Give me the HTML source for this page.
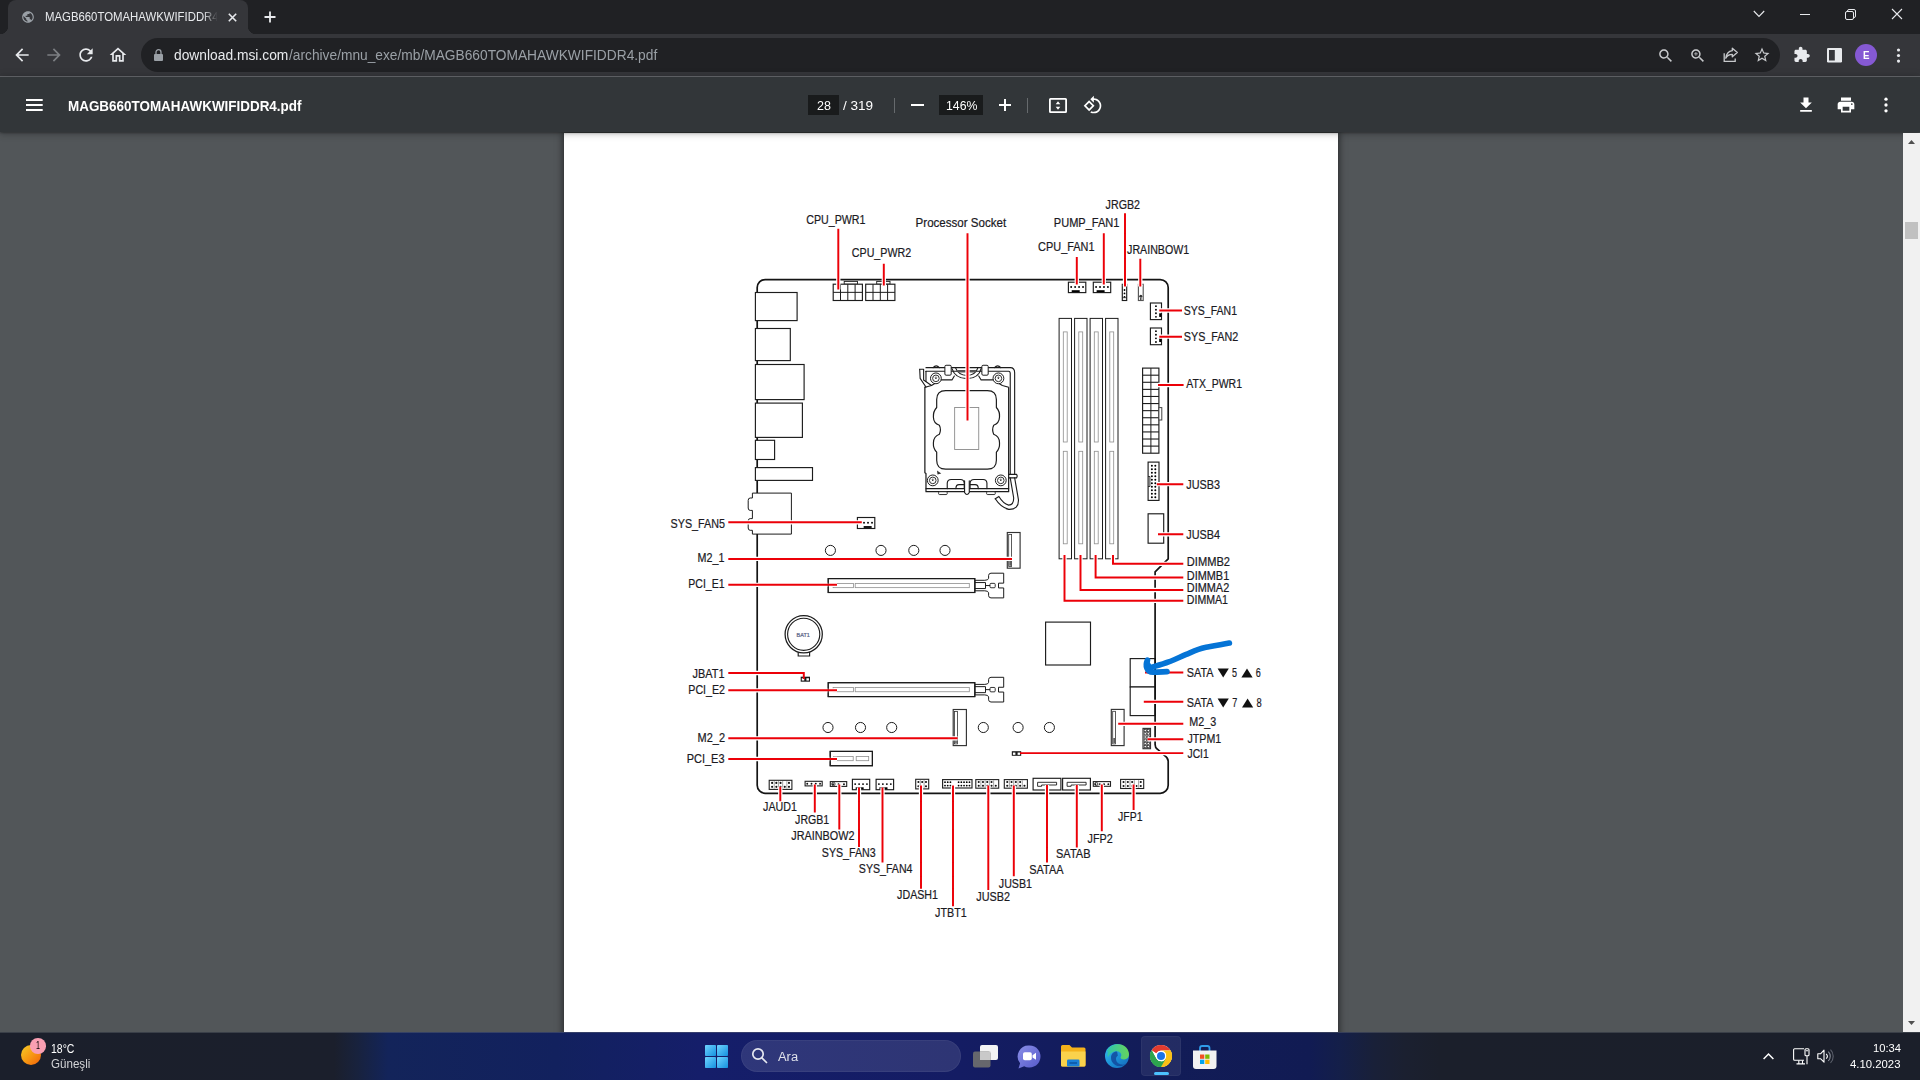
<!DOCTYPE html>
<html lang="tr"><head><meta charset="utf-8"><title>MAGB660TOMAHAWKWIFIDDR4.pdf</title>
<style>
html,body{margin:0;padding:0}
body{width:1920px;height:1080px;overflow:hidden;position:relative;background:#525659;font-family:"Liberation Sans",sans-serif}
.t{position:absolute;white-space:nowrap;line-height:1;transform-origin:0 0;display:block}
.i{position:absolute;display:block;overflow:visible}
.abs{position:absolute}
#tabstrip{left:0;top:0;width:1920px;height:34px;background:#202124}
#tab{left:8px;top:0;width:240px;height:34px;background:#35363a;border-radius:8px 8px 0 0}
#tab:before,#tab:after{content:"";position:absolute;bottom:0;width:8px;height:8px;background:radial-gradient(circle at 0 0,#202124 8px,#35363a 8.5px)}
#tab:before{left:-8px}
#tab:after{right:-8px;background:radial-gradient(circle at 100% 0,#202124 8px,#35363a 8.5px)}
#toolbar{left:0;top:34px;width:1920px;height:42px;background:#35363a}
#toolbar-line{left:0;top:76px;width:1920px;height:1px;background:#5c5e62;z-index:6}
#omnibox{left:141px;top:38px;width:1638.5px;height:34px;border-radius:17px;background:#202124}
#pdfbar{left:0;top:77px;width:1920px;height:55px;background:#323639;box-shadow:0 -2px 8px rgba(0,0,0,.09),0 4px 8px rgba(0,0,0,.06),0 1px 2px rgba(0,0,0,.3),0 2px 6px rgba(0,0,0,.15);z-index:5}
.pbox{background:#191b1c;height:20px;top:94.8px}
.pdiv{width:1px;height:15.5px;top:97.8px;background:#666a6d}
#viewer{left:0;top:132px;width:1920px;height:900px;background:#525659;overflow:hidden}
#page{left:564px;top:0.5px;width:774px;height:910px;background:#fff;box-shadow:0 0 7px 1px rgba(0,0,0,.55)}
#sbar{left:1903px;top:133px;width:17px;height:899px;background:#f1f1f1;z-index:6}
#sthumb{left:2px;top:89px;width:13px;height:17px;background:#c1c1c1}
#taskbar{left:0;top:1032px;width:1920px;height:48px;z-index:7;
background:linear-gradient(90deg,#1b1f2b 0,#1b1f2c 17.4%,#18223d 18.6%,#13245a 20.2%,#12215e 29%,#151e6a 36.5%,#141c63 50%,#121c58 60%,#111b53 68.2%,#141f49 69.8%,#192038 71.6%,#1b2030 73.2%,#1b1f2b 75%,#1b1f2a 100%)}
#search{left:741px;top:8px;width:220px;height:32px;border-radius:16px;background:rgba(255,255,255,.115);box-shadow:inset 0 0 0 1px rgba(255,255,255,.05)}
#dia{left:0;top:0;z-index:3}
#dia text{font-family:"Liberation Sans",sans-serif}
</style></head><body>

<div id="tabstrip" class="abs"></div><div id="tab" class="abs"></div>
<svg class="i" style="left:20.5px;top:10px" width="14" height="14" viewBox="0 0 24 24" fill="#9aa0a6"><path d="M12 2C6.48 2 2 6.48 2 12s4.48 10 10 10 10-4.48 10-10S17.52 2 12 2zm-1 17.93c-3.95-.49-7-3.85-7-7.93 0-.62.08-1.21.21-1.79L9 15v1c0 1.1.9 2 2 2v1.930zm6.900-2.540c-.26-.81-1-1.390-1.900-1.390h-1v-3c0-.55-.45-1-1-1H8v-2h2c.55 0 1-.45 1-1V7h2c1.100 0 2-.9 2-2v-.410c2.930 1.190 5 4.060 5 7.410 0 2.080-.8 3.970-2.100 5.390z"/></svg>
<span class="t" style="left:44.50px;top:10.90px;font-size:12.65px;color:#e8eaed;transform:scaleX(0.8990);-webkit-mask-image:linear-gradient(90deg,#000 0,#000 91%,transparent 99.500%);mask-image:linear-gradient(90deg,#000 0,#000 91%,transparent 99.500%);">MAGB660TOMAHAWKWIFIDDR4</span>
<svg class="i" style="left:227.5px;top:12.5px" width="9" height="9" viewBox="0 0 9 9" stroke="#e8eaed" stroke-width="1.6" fill="none"><path d="M.8.8l7.400 7.400M8.200.8L.8 8.200"/></svg>
<svg class="i" style="left:264px;top:11px" width="12" height="12" viewBox="0 0 12 12" stroke="#e8eaed" stroke-width="1.8" fill="none"><path d="M6 .5v11M.5 6h11"/></svg>
<svg class="i" style="left:1753px;top:10px" width="12" height="8" viewBox="0 0 12 8" stroke="#e8eaed" stroke-width="1.1" fill="none"><path d="M.8 1l5.200 5.500L11.200 1"/></svg>
<svg class="i" style="left:1800px;top:14px" width="10" height="1" viewBox="0 0 10 1"><rect width="10" height="1" fill="#e8eaed"/></svg>
<svg class="i" style="left:1845px;top:8.5px" width="11" height="11" viewBox="0 0 11 11" stroke="#e8eaed" stroke-width="1" fill="none"><rect x=".5" y="2.500" width="8" height="8" rx="1.500"/><path d="M2.500 2.500V2A1.500 1.500 0 0 1 4 .5h5A1.500 1.500 0 0 1 10.500 2v5A1.500 1.500 0 0 1 9 8.500H8.500"/></svg>
<svg class="i" style="left:1892px;top:9px" width="10" height="10" viewBox="0 0 10 10" stroke="#e8eaed" stroke-width="1.1" fill="none"><path d="M0 0l10 10M10 0L0 10"/></svg>
<div id="toolbar" class="abs"></div><div id="toolbar-line" class="abs"></div><div id="omnibox" class="abs"></div>
<svg class="i" style="left:11.70px;top:45.00px" width="20.00" height="20.00" viewBox="0 0 24 24" fill="#e8eaed"><path d="M20 11H7.830l5.590-5.590L12 4l-8 8 8 8 1.410-1.410L7.830 13H20v-2z"/></svg>
<svg class="i" style="left:43.70px;top:45.00px" width="20.00" height="20.00" viewBox="0 0 24 24" fill="#7c7f83"><path d="M12 4l-1.410 1.410L16.170 11H4v2h12.170l-5.580 5.590L12 20l8-8z"/></svg>
<svg class="i" style="left:75.70px;top:45.00px" width="20.00" height="20.00" viewBox="0 0 24 24" fill="#e8eaed"><path d="M17.650 6.350C16.200 4.900 14.210 4 12 4c-4.420 0-7.990 3.580-7.990 8s3.570 8 7.990 8c3.730 0 6.840-2.550 7.730-6h-2.080c-.82 2.330-3.040 4-5.650 4-3.310 0-6-2.690-6-6s2.690-6 6-6c1.660 0 3.140.69 4.220 1.780L13 11h7V4l-2.350 2.350z"/></svg>
<svg class="i" style="left:107.50px;top:45.00px" width="20.00" height="20.00" viewBox="0 0 24 24" fill="#e8eaed"><path d="M12 5.690l5 4.500V18h-2v-6H9v6H7v-7.810l5-4.500M12 3L2 12h3v8h6v-6h2v6h6v-8h3L12 3z"/></svg>
<svg class="i" style="left:153.5px;top:48.5px" width="9" height="12" viewBox="0 0 9 12" fill="#9aa0a6"><path d="M1 5h7a1 1 0 0 1 1 1v5a1 1 0 0 1-1 1H1a1 1 0 0 1-1-1V6a1 1 0 0 1 1-1z"/><path d="M2 5.500V3.200a2.500 2.500 0 0 1 5 0V5.500" fill="none" stroke="#9aa0a6" stroke-width="1.300"/></svg>
<span class="t" style="left:174.30px;top:47.90px;font-size:14.53px;color:#e8eaed;transform:scaleX(0.9513);">download.msi.com</span>
<span class="t" style="left:288.80px;top:47.90px;font-size:14.53px;color:#9aa0a6;transform:scaleX(0.9470);">/archive/mnu_exe/mb/MAGB660TOMAHAWKWIFIDDR4.pdf</span>
<svg class="i" style="left:1657.45px;top:46.85px" width="17.50" height="17.50" viewBox="0 0 24 24" fill="#c7c9cc"><path d="M15.500 14h-.79l-.28-.27C15.410 12.590 16 11.110 16 9.500 16 5.910 13.090 3 9.500 3S3 5.910 3 9.500 5.910 16 9.500 16c1.610 0 3.090-.59 4.230-1.570l.27.28v.79l5 4.990L20.490 19l-4.990-5zm-6 0C7.010 14 5 11.990 5 9.500S7.010 5 9.500 5 14 7.010 14 9.500 11.990 14 9.500 14z"/></svg>
<svg class="i" style="left:1689.25px;top:46.85px" width="17.50" height="17.50" viewBox="0 0 24 24" fill="#c7c9cc"><path d="M15.500 14h-.79l-.28-.27C15.410 12.590 16 11.110 16 9.500 16 5.910 13.090 3 9.500 3S3 5.910 3 9.500 5.910 16 9.500 16c1.610 0 3.090-.59 4.230-1.570l.27.28v.79l5 4.990L20.490 19l-4.990-5zm-6 0C7.010 14 5 11.990 5 9.500S7.010 5 9.500 5 14 7.010 14 9.500 11.990 14 9.500 14z"/><path d="M12 10h-2v2H9v-2H7V9h2V7h1v2h2v1z"/></svg>
<svg class="i" style="left:1721.5px;top:47px" width="17" height="16" viewBox="0 0 17 16" fill="none" stroke="#c7c9cc" stroke-width="1.300"><path d="M2.200 6.200V14.300H13.200V11.500"/><path d="M10.300 1.200l5 4.300-5 4.300V7.300C7 7.300 5 8.600 3.800 11.200 4.300 7 6.500 4.300 10.300 3.700z" stroke-linejoin="round"/></svg>
<svg class="i" style="left:1752.70px;top:45.80px" width="18.00" height="18.00" viewBox="0 0 24 24" fill="#c7c9cc"><path d="M22 9.240l-7.190-.62L12 2 9.190 8.630 2 9.240l5.460 4.730L5.820 21 12 17.270 18.180 21l-1.630-7.030L22 9.240zM12 15.400l-3.760 2.270 1-4.280-3.320-2.880 4.380-.38L12 6.100l1.710 4.040 4.380.38-3.320 2.880 1 4.280L12 15.400z"/></svg>
<svg class="i" style="left:1793.25px;top:46.45px" width="17.50" height="17.50" viewBox="0 0 24 24" fill="#e8eaed"><path d="M20.500 11H19V7c0-1.100-.9-2-2-2h-4V3.500C13 2.120 11.880 1 10.500 1S8 2.120 8 3.500V5H4c-1.100 0-1.990.9-1.990 2v3.800H3.500c1.490 0 2.700 1.210 2.700 2.700s-1.210 2.700-2.700 2.700H2V20c0 1.100.9 2 2 2h3.800v-1.500c0-1.490 1.210-2.700 2.700-2.700 1.490 0 2.700 1.210 2.700 2.700V22H17c1.100 0 2-.9 2-2v-4h1.500c1.380 0 2.500-1.120 2.500-2.500S21.880 11 20.500 11z"/></svg>
<svg class="i" style="left:1826.5px;top:47.8px" width="15" height="14.500" viewBox="0 0 15 14.500"><rect width="15" height="14.500" rx="1.200" fill="#e8eaed"/><rect x="2" y="2" width="5.800" height="10.500" fill="#35363a"/></svg>
<div class="abs" style="left:1854.7px;top:43.7px;width:22.600px;height:22.600px;border-radius:50%;background:#8559d3"></div>
<span class="t" style="left:1862.90px;top:50.43px;font-size:11.19px;color:#ffffff;font-weight:bold;transform:scaleX(0.8707);">E</span>
<svg class="i" style="left:1888.90px;top:45.70px" width="19.00" height="19.00" viewBox="0 0 24 24" fill="#e8eaed"><circle cx="12" cy="5" r="2"/><circle cx="12" cy="12" r="2"/><circle cx="12" cy="19" r="2"/></svg>
<div id="pdfbar" class="abs"></div>
<div class="abs" style="z-index:6;left:0;top:0">
<svg class="i" style="left:25.800px;top:98.900px" width="16.700" height="12" viewBox="0 0 16.700 12" fill="#fff"><rect y="0" width="16.700" height="2"/><rect y="5" width="16.700" height="2"/><rect y="10" width="16.700" height="2"/></svg>
<span class="t" style="left:68.20px;top:98.90px;font-size:14.53px;color:#ffffff;font-weight:bold;transform:scaleX(0.9260);">MAGB660TOMAHAWKWIFIDDR4.pdf</span>
<div class="abs pbox" style="left:808px;width:31px"></div>
<span class="t" style="left:816.60px;top:99.62px;font-size:12.50px;color:#ffffff;transform:scaleX(0.9997);">28</span>
<span class="t" style="left:843.30px;top:99.62px;font-size:12.50px;color:#ffffff;transform:scaleX(1.0827);">/ 319</span>
<div class="abs pdiv" style="left:894px"></div>
<div class="abs" style="left:911px;top:104px;width:12.500px;height:2px;background:#fff"></div>
<div class="abs pbox" style="left:939px;width:44px"></div>
<span class="t" style="left:945.50px;top:99.62px;font-size:12.50px;color:#ffffff;transform:scaleX(0.9822);">146%</span>
<svg class="i" style="left:999px;top:99px" width="12" height="12" viewBox="0 0 12 12" fill="#fff"><rect x="5" width="2" height="12"/><rect y="5" width="12" height="2"/></svg>
<div class="abs pdiv" style="left:1027px"></div>
<svg class="i" style="left:1049px;top:97.5px" width="18" height="15" viewBox="0 0 18 15" fill="#fff"><path d="M1.500 0h15A1.500 1.500 0 0 1 18 1.500v12a1.500 1.500 0 0 1-1.500 1.500h-15A1.500 1.500 0 0 1 0 13.500v-12A1.500 1.500 0 0 1 1.500 0zM1.800 1.800v11.400h14.400V1.800z" fill-rule="evenodd"/><path d="M9 3.200l2.300 3H6.700zM9 11.800l-2.300-3h4.600z"/></svg>
<svg class="i" style="left:1083.20px;top:94.60px" width="20.00" height="20.00" viewBox="0 0 24 24" fill="#ffffff"><path d="M7.340 6.410L.86 12.900l6.490 6.480 6.490-6.480-6.500-6.490zM3.690 12.900l3.660-3.660L11 12.900l-3.660 3.660-3.650-3.660zm15.670-6.260C17.610 4.880 15.300 4 13 4V.76L8.760 5 13 9.240V6c1.790 0 3.580.68 4.950 2.050 2.730 2.730 2.730 7.170 0 9.900C16.580 19.320 14.790 20 13 20c-.97 0-1.940-.21-2.840-.61l-1.490 1.490C10.020 21.620 11.510 22 13 22c2.300 0 4.610-.88 6.360-2.640 3.520-3.510 3.520-9.210 0-12.720z"/></svg>
<svg class="i" style="left:1795.60px;top:94.70px" width="20.00" height="20.00" viewBox="0 0 24 24" fill="#ffffff"><path d="M19 9h-4V3H9v6H5l7 7 7-7zM5 18v2h14v-2H5z"/></svg>
<svg class="i" style="left:1836.00px;top:95.00px" width="20.00" height="20.00" viewBox="0 0 24 24" fill="#ffffff"><path d="M19 8H5c-1.660 0-3 1.340-3 3v6h4v4h12v-4h4v-6c0-1.660-1.340-3-3-3zm-3 11H8v-5h8v5zm3-7c-.55 0-1-.45-1-1s.45-1 1-1 1 .45 1 1-.45 1-1 1zm-1-9H6v4h12V3z"/></svg>
<svg class="i" style="left:1875.90px;top:95.00px" width="20.00" height="20.00" viewBox="0 0 24 24" fill="#ffffff"><circle cx="12" cy="5" r="2"/><circle cx="12" cy="12" r="2"/><circle cx="12" cy="19" r="2"/></svg>
</div>
<div id="viewer" class="abs"><div id="page" class="abs"></div></div>
<div id="sbar" class="abs"><div id="sthumb" class="abs"></div><svg class="i" style="left:5px;top:7px" width="7" height="4" viewBox="0 0 7 4" fill="#505050"><path d="M0 4L3.500 0 7 4z"/></svg><svg class="i" style="left:5px;top:888px" width="7" height="4" viewBox="0 0 7 4" fill="#505050"><path d="M0 0L3.500 4 7 0z"/></svg></div>
<svg id="dia" class="abs" width="1920" height="1080" viewBox="0 0 1920 1080">
<path d="M765.2 279.6H1160.2a8 8 0 0 1 8 8V558.8L1155.1 571.8V744.500Q1155.1 747.6 1157.4 749.2L1164.600 755.6Q1168.2 757.900 1168.2 761V785.300a8 8 0 0 1-8 8H765.2a8 8 0 0 1-8-8V287.600a8 8 0 0 1 8-8z" fill="#fff" stroke="#141414" stroke-width="1.7"/>
<rect x="755.40" y="292.50" width="41.70" height="28.10" fill="#fff" stroke="#1c1c1c" stroke-width="1.15"/>
<rect x="755.40" y="328.50" width="34.90" height="32.10" fill="#fff" stroke="#1c1c1c" stroke-width="1.15"/>
<rect x="755.40" y="364.50" width="48.70" height="35.10" fill="#fff" stroke="#1c1c1c" stroke-width="1.15"/>
<rect x="755.40" y="403.10" width="47.00" height="34.30" fill="#fff" stroke="#1c1c1c" stroke-width="1.15"/>
<rect x="755.40" y="440.30" width="19.20" height="19.20" fill="#fff" stroke="#1c1c1c" stroke-width="1.15"/>
<rect x="755.40" y="467.60" width="57.10" height="12.80" fill="#fff" stroke="#1c1c1c" stroke-width="1.15"/>
<path d="M752.4 493.1H791.4V534.1H752.4V530.3H750.2Q748.2 530.3 748.2 528V521Q748.2 518.6 750.2 518.6H752.4V510.4H750.2Q748.2 510.4 748.2 508V500.400Q748.2 498 750.2 498H752.4z" fill="#fff" stroke="#1c1c1c" stroke-width="1"/>
<rect x="844.20" y="281.40" width="13.30" height="2.80" fill="#fff" stroke="#1c1c1c" stroke-width="0.90"/>
<rect x="833.20" y="284.20" width="29.20" height="16.30" fill="#fff" stroke="#1c1c1c" stroke-width="1.15"/>
<path d="M833.20 292.35H862.40" stroke="#1c1c1c" stroke-width="1"/>
<path d="M840.50 284.2V300.5" stroke="#1c1c1c" stroke-width="1"/>
<path d="M847.80 284.2V300.5" stroke="#1c1c1c" stroke-width="1"/>
<path d="M855.10 284.2V300.5" stroke="#1c1c1c" stroke-width="1"/>
<rect x="876.70" y="281.40" width="13.30" height="2.80" fill="#fff" stroke="#1c1c1c" stroke-width="0.90"/>
<rect x="865.70" y="284.20" width="29.20" height="16.30" fill="#fff" stroke="#1c1c1c" stroke-width="1.15"/>
<path d="M865.70 292.35H894.90" stroke="#1c1c1c" stroke-width="1"/>
<path d="M873.00 284.2V300.5" stroke="#1c1c1c" stroke-width="1"/>
<path d="M880.30 284.2V300.5" stroke="#1c1c1c" stroke-width="1"/>
<path d="M887.60 284.2V300.5" stroke="#1c1c1c" stroke-width="1"/>
<rect x="1068.40" y="282.20" width="17.40" height="10.40" fill="#fff" stroke="#1c1c1c" stroke-width="1.15"/><circle cx="1071.18" cy="286.98" r="0.95" fill="#000"/><circle cx="1075.13" cy="286.98" r="0.95" fill="#000"/><circle cx="1079.08" cy="286.98" r="0.95" fill="#000"/><circle cx="1083.03" cy="286.98" r="0.95" fill="#000"/><rect x="1071.71" y="290.20" width="8.00" height="2" fill="#000"/>
<rect x="1093.30" y="282.20" width="17.40" height="10.40" fill="#fff" stroke="#1c1c1c" stroke-width="1.15"/><circle cx="1096.08" cy="286.98" r="0.95" fill="#000"/><circle cx="1100.03" cy="286.98" r="0.95" fill="#000"/><circle cx="1103.98" cy="286.98" r="0.95" fill="#000"/><circle cx="1107.93" cy="286.98" r="0.95" fill="#000"/><rect x="1096.61" y="290.20" width="8.00" height="2" fill="#000"/>
<rect x="1150.40" y="303.00" width="11.10" height="16.60" fill="#fff" stroke="#1c1c1c" stroke-width="1.15"/><circle cx="1155.95" cy="306.15" r="0.95" fill="#000"/><circle cx="1155.95" cy="309.72" r="0.95" fill="#000"/><circle cx="1155.95" cy="313.29" r="0.95" fill="#000"/><circle cx="1155.95" cy="316.86" r="0.95" fill="#000"/><rect x="1159.20" y="313.29" width="2" height="3.65" fill="#000"/>
<rect x="1150.40" y="328.00" width="11.10" height="16.70" fill="#fff" stroke="#1c1c1c" stroke-width="1.15"/><circle cx="1155.95" cy="331.17" r="0.95" fill="#000"/><circle cx="1155.95" cy="334.76" r="0.95" fill="#000"/><circle cx="1155.95" cy="338.35" r="0.95" fill="#000"/><circle cx="1155.95" cy="341.94" r="0.95" fill="#000"/><rect x="1159.20" y="338.35" width="2" height="3.67" fill="#000"/>
<rect x="857.40" y="517.50" width="17.40" height="11.00" fill="#fff" stroke="#1c1c1c" stroke-width="1.15"/><circle cx="864.01" cy="522.78" r="0.95" fill="#000"/><circle cx="868.01" cy="522.78" r="0.95" fill="#000"/><circle cx="872.02" cy="522.78" r="0.95" fill="#000"/><rect x="863.66" y="526.10" width="8.00" height="1.8" fill="#000"/>
<rect x="1122.30" y="284.30" width="4.40" height="16.20" fill="#fff" stroke="#1c1c1c" stroke-width="1.15"/>
<circle cx="1124.50" cy="290.00" r="0.90" fill="#000"/><circle cx="1124.50" cy="293.40" r="0.90" fill="#000"/><circle cx="1124.50" cy="296.80" r="0.90" fill="#000"/>
<path d="M1122.3 297.7H1126.7" stroke="#1c1c1c" stroke-width=".8"/>
<rect x="1138.40" y="284.30" width="4.80" height="16.20" fill="#fff" stroke="#555" stroke-width="1.15"/>
<circle cx="1140.80" cy="296.20" r="1.50" fill="#333"/>
<circle cx="1140.80" cy="299.00" r="0.90" fill="#333"/>
<rect x="1059.10" y="318.40" width="12.40" height="240.40" fill="#fff" stroke="#1c1c1c" stroke-width="1.00"/>
<rect x="1063.30" y="331.90" width="3.90" height="110.10" fill="#fff" stroke="#8e8e8e" stroke-width="0.80"/>
<rect x="1063.30" y="451.30" width="3.90" height="92.50" fill="#fff" stroke="#8e8e8e" stroke-width="0.80"/>
<rect x="1074.60" y="318.40" width="12.40" height="240.40" fill="#fff" stroke="#1c1c1c" stroke-width="1.00"/>
<rect x="1078.80" y="331.90" width="3.90" height="110.10" fill="#fff" stroke="#8e8e8e" stroke-width="0.80"/>
<rect x="1078.80" y="451.30" width="3.90" height="92.50" fill="#fff" stroke="#8e8e8e" stroke-width="0.80"/>
<rect x="1090.10" y="318.40" width="12.40" height="240.40" fill="#fff" stroke="#1c1c1c" stroke-width="1.00"/>
<rect x="1094.30" y="331.90" width="3.90" height="110.10" fill="#fff" stroke="#8e8e8e" stroke-width="0.80"/>
<rect x="1094.30" y="451.30" width="3.90" height="92.50" fill="#fff" stroke="#8e8e8e" stroke-width="0.80"/>
<rect x="1105.60" y="318.40" width="12.40" height="240.40" fill="#fff" stroke="#1c1c1c" stroke-width="1.00"/>
<rect x="1109.80" y="331.90" width="3.90" height="110.10" fill="#fff" stroke="#8e8e8e" stroke-width="0.80"/>
<rect x="1109.80" y="451.30" width="3.90" height="92.50" fill="#fff" stroke="#8e8e8e" stroke-width="0.80"/>
<rect x="1142.60" y="368.10" width="16.30" height="85.10" fill="#fff" stroke="#1c1c1c" stroke-width="1.15"/>
<path d="M1150.9 368.1V453.2" stroke="#1c1c1c" stroke-width="1"/>
<path d="M1142.6 375.19H1158.9" stroke="#1c1c1c" stroke-width="1.1"/>
<path d="M1142.6 382.28H1158.9" stroke="#1c1c1c" stroke-width="1.1"/>
<path d="M1142.6 389.38H1158.9" stroke="#1c1c1c" stroke-width="1.1"/>
<path d="M1142.6 396.47H1158.9" stroke="#1c1c1c" stroke-width="1.1"/>
<path d="M1142.6 403.56H1158.9" stroke="#1c1c1c" stroke-width="1.1"/>
<path d="M1142.6 410.65H1158.9" stroke="#1c1c1c" stroke-width="1.1"/>
<path d="M1142.6 417.74H1158.9" stroke="#1c1c1c" stroke-width="1.1"/>
<path d="M1142.6 424.83H1158.9" stroke="#1c1c1c" stroke-width="1.1"/>
<path d="M1142.6 431.93H1158.9" stroke="#1c1c1c" stroke-width="1.1"/>
<path d="M1142.6 439.02H1158.9" stroke="#1c1c1c" stroke-width="1.1"/>
<path d="M1142.6 446.11H1158.9" stroke="#1c1c1c" stroke-width="1.1"/>
<rect x="1158.90" y="407.60" width="2.90" height="12.40" fill="#fff" stroke="#444" stroke-width="1.00"/>
<rect x="1148.10" y="462.10" width="10.90" height="38.30" fill="#fff" stroke="#1c1c1c" stroke-width="1.15"/>
<circle cx="1151.90" cy="465.80" r="1.00" fill="#000"/><circle cx="1155.30" cy="465.80" r="1.00" fill="#000"/><circle cx="1151.90" cy="469.30" r="1.00" fill="#000"/><circle cx="1155.30" cy="469.30" r="1.00" fill="#000"/><circle cx="1151.90" cy="472.80" r="1.00" fill="#000"/><circle cx="1155.30" cy="472.80" r="1.00" fill="#000"/><circle cx="1151.90" cy="476.30" r="1.00" fill="#000"/><circle cx="1155.30" cy="476.30" r="1.00" fill="#000"/><circle cx="1151.90" cy="479.80" r="1.00" fill="#000"/><circle cx="1155.30" cy="479.80" r="1.00" fill="#000"/><circle cx="1151.90" cy="483.30" r="1.00" fill="#000"/><circle cx="1155.30" cy="483.30" r="1.00" fill="#000"/><circle cx="1151.90" cy="486.80" r="1.00" fill="#000"/><circle cx="1155.30" cy="486.80" r="1.00" fill="#000"/><circle cx="1151.90" cy="490.30" r="1.00" fill="#000"/><circle cx="1155.30" cy="490.30" r="1.00" fill="#000"/><circle cx="1151.90" cy="493.80" r="1.00" fill="#000"/><circle cx="1155.30" cy="493.80" r="1.00" fill="#000"/><circle cx="1151.90" cy="497.30" r="1.00" fill="#000"/><circle cx="1155.30" cy="497.30" r="1.00" fill="#000"/>
<path d="M1148.1 476.500h1.800v10h-1.800" fill="none" stroke="#1c1c1c" stroke-width=".9"/>
<rect x="1148.10" y="513.80" width="15.60" height="29.40" fill="#fff" stroke="#1c1c1c" stroke-width="1.15"/>
<rect x="1045.60" y="622.10" width="44.90" height="42.90" fill="#fff" stroke="#1c1c1c" stroke-width="1.15"/>
<path d="M798.2 650V656H809.6V650" fill="#fff" stroke="#1c1c1c" stroke-width="1.15"/>
<circle cx="803.7" cy="634.3" r="18.6" fill="#fff" stroke="#1c1c1c" stroke-width="1.25"/>
<circle cx="803.7" cy="634.3" r="16.1" fill="#fff" stroke="#1c1c1c" stroke-width="1.1"/>
<text x="796.60" y="636.60" font-size="5.09" textLength="13.20" lengthAdjust="spacingAndGlyphs" fill="#5a6486" stroke="#5a6486" stroke-width=".22">BAT1</text>
<circle cx="830.40" cy="550.40" r="5.05" fill="#fff" stroke="#1c1c1c" stroke-width="1"/>
<circle cx="881.00" cy="550.40" r="5.05" fill="#fff" stroke="#1c1c1c" stroke-width="1"/>
<circle cx="913.80" cy="550.40" r="5.05" fill="#fff" stroke="#1c1c1c" stroke-width="1"/>
<circle cx="945.00" cy="550.40" r="5.05" fill="#fff" stroke="#1c1c1c" stroke-width="1"/>
<circle cx="828.00" cy="727.50" r="5.05" fill="#fff" stroke="#1c1c1c" stroke-width="1"/>
<circle cx="860.50" cy="727.50" r="5.05" fill="#fff" stroke="#1c1c1c" stroke-width="1"/>
<circle cx="891.70" cy="727.50" r="5.05" fill="#fff" stroke="#1c1c1c" stroke-width="1"/>
<circle cx="983.30" cy="727.50" r="5.05" fill="#fff" stroke="#1c1c1c" stroke-width="1"/>
<circle cx="1018.10" cy="727.50" r="5.05" fill="#fff" stroke="#1c1c1c" stroke-width="1"/>
<circle cx="1049.40" cy="727.50" r="5.05" fill="#fff" stroke="#1c1c1c" stroke-width="1"/>
<rect x="1007.30" y="532.50" width="12.80" height="35.70" fill="#fff" stroke="#333" stroke-width="1.15"/><rect x="1008.70" y="534.40" width="2.90" height="32.10" fill="#fff" stroke="#333" stroke-width="0.80"/><path d="M1010.10 565.70v-5" stroke="#1c1c1c" stroke-width="1.2"/>
<rect x="953.20" y="709.50" width="13.20" height="36.10" fill="#fff" stroke="#333" stroke-width="1.15"/><rect x="954.60" y="711.40" width="2.90" height="32.50" fill="#fff" stroke="#333" stroke-width="0.80"/><path d="M956.00 743.10v-5" stroke="#1c1c1c" stroke-width="1.2"/>
<rect x="1111.30" y="709.40" width="12.80" height="36.20" fill="#fff" stroke="#333" stroke-width="1.15"/><rect x="1112.70" y="711.30" width="2.90" height="32.60" fill="#fff" stroke="#333" stroke-width="0.80"/><path d="M1114.10 743.10v-5" stroke="#1c1c1c" stroke-width="1.2"/>
<path d="M974.8 580.30H984.8Q988.2 580.30 988.6 578.30V575.40Q988.8 573.20 991 573.20H1003.7V583.15H998.5V587.95H1003.7V597.90H991Q988.8 597.90 988.6 595.70V592.80Q988.2 590.80 984.8 590.80H974.8z" fill="#fff" stroke="#1c1c1c" stroke-width="1"/><path d="M974.8 582.55H985.5V588.55H974.8" fill="none" stroke="#1c1c1c" stroke-width="1"/><path d="M985.5 585.55H990" stroke="#1c1c1c" stroke-width="1"/><rect x="990.00" y="583.35" width="5.20" height="4.40" fill="#fff" stroke="#1c1c1c" stroke-width="0.90" rx="1.00"/><path d="M973.600 582.95q-1.500 2.600 0 5.200" fill="none" stroke="#1c1c1c" stroke-width="1"/><rect x="828.20" y="578.60" width="146.60" height="13.90" fill="#fff" stroke="#1c1c1c" stroke-width="1.10"/><rect x="833.10" y="583.45" width="20.30" height="4.20" fill="#fff" stroke="#8e8e8e" stroke-width="0.80"/><rect x="855.20" y="583.45" width="114.10" height="4.20" fill="#fff" stroke="#8e8e8e" stroke-width="0.80"/>
<path d="M974.8 684.40H984.8Q988.2 684.40 988.6 682.40V679.50Q988.8 677.30 991 677.30H1003.7V687.25H998.5V692.05H1003.7V702.00H991Q988.8 702.00 988.6 699.80V696.90Q988.2 694.90 984.8 694.90H974.8z" fill="#fff" stroke="#1c1c1c" stroke-width="1"/><path d="M974.8 686.65H985.5V692.65H974.8" fill="none" stroke="#1c1c1c" stroke-width="1"/><path d="M985.5 689.65H990" stroke="#1c1c1c" stroke-width="1"/><rect x="990.00" y="687.45" width="5.20" height="4.40" fill="#fff" stroke="#1c1c1c" stroke-width="0.90" rx="1.00"/><path d="M973.600 687.05q-1.500 2.600 0 5.200" fill="none" stroke="#1c1c1c" stroke-width="1"/><rect x="828.20" y="682.70" width="146.60" height="13.90" fill="#fff" stroke="#1c1c1c" stroke-width="1.10"/><rect x="833.10" y="687.55" width="20.30" height="4.20" fill="#fff" stroke="#8e8e8e" stroke-width="0.80"/><rect x="855.20" y="687.55" width="114.10" height="4.20" fill="#fff" stroke="#8e8e8e" stroke-width="0.80"/>
<rect x="830.20" y="751.40" width="42.20" height="14.30" fill="#fff" stroke="#1c1c1c" stroke-width="1.15"/>
<rect x="833.60" y="756.40" width="19.60" height="4.30" fill="#fff" stroke="#8e8e8e" stroke-width="0.80"/>
<rect x="856.20" y="756.40" width="12.50" height="4.30" fill="#fff" stroke="#8e8e8e" stroke-width="0.80"/>
<rect x="1130.20" y="658.60" width="24.90" height="28.40" fill="#fff" stroke="#1c1c1c" stroke-width="1.15"/>
<rect x="1130.20" y="687.00" width="24.90" height="28.60" fill="#fff" stroke="#1c1c1c" stroke-width="1.15"/>
<path d="M1155.1 658V716" stroke="#141414" stroke-width="1.7"/>
<rect x="1143.00" y="728.40" width="7.50" height="20.30" fill="#fff" stroke="#333" stroke-width="1.15"/>
<rect x="1144.10" y="729.50" width="2.200" height="2.200" fill="#fff" stroke="#222" stroke-width=".7"/><rect x="1147.20" y="729.50" width="2.200" height="2.200" fill="#fff" stroke="#222" stroke-width=".7"/><rect x="1144.10" y="732.70" width="2.200" height="2.200" fill="#fff" stroke="#222" stroke-width=".7"/><rect x="1147.20" y="732.70" width="2.200" height="2.200" fill="#fff" stroke="#222" stroke-width=".7"/><rect x="1144.10" y="735.90" width="2.200" height="2.200" fill="#fff" stroke="#222" stroke-width=".7"/><rect x="1147.20" y="735.90" width="2.200" height="2.200" fill="#fff" stroke="#222" stroke-width=".7"/><rect x="1144.10" y="739.10" width="2.200" height="2.200" fill="#fff" stroke="#222" stroke-width=".7"/><rect x="1147.20" y="739.10" width="2.200" height="2.200" fill="#fff" stroke="#222" stroke-width=".7"/><rect x="1144.10" y="742.30" width="2.200" height="2.200" fill="#fff" stroke="#222" stroke-width=".7"/><rect x="1147.20" y="742.30" width="2.200" height="2.200" fill="#fff" stroke="#222" stroke-width=".7"/><rect x="1144.10" y="745.50" width="2.200" height="2.200" fill="#fff" stroke="#222" stroke-width=".7"/><rect x="1147.20" y="745.50" width="2.200" height="2.200" fill="#fff" stroke="#222" stroke-width=".7"/>
<rect x="769.20" y="780.30" width="22.70" height="9.10" fill="#fff" stroke="#222" stroke-width="1.10"/><circle cx="772.11" cy="782.88" r="1.05" fill="#111"/><circle cx="772.11" cy="786.83" r="1.05" fill="#111"/><path d="M774.22 781.10V788.60" stroke="#666" stroke-width=".6"/><circle cx="776.33" cy="782.88" r="1.05" fill="#111"/><circle cx="776.33" cy="786.83" r="1.05" fill="#111"/><path d="M778.44 781.10V788.60" stroke="#666" stroke-width=".6"/><circle cx="780.55" cy="782.88" r="1.05" fill="#111"/><circle cx="780.55" cy="786.83" r="1.05" fill="#111"/><path d="M782.66 781.10V788.60" stroke="#666" stroke-width=".6"/><circle cx="784.77" cy="786.83" r="1.05" fill="#111"/><path d="M786.88 781.10V788.60" stroke="#666" stroke-width=".6"/><circle cx="788.99" cy="782.88" r="1.05" fill="#111"/><circle cx="788.99" cy="786.83" r="1.05" fill="#111"/>
<rect x="805.10" y="781.30" width="17.10" height="4.60" fill="#fff" stroke="#222" stroke-width="1.10"/><circle cx="807.24" cy="783.80" r=".95" fill="#111"/><circle cx="811.51" cy="783.80" r=".95" fill="#111"/><circle cx="815.79" cy="783.80" r=".95" fill="#111"/><circle cx="820.06" cy="783.80" r=".95" fill="#111"/>
<rect x="830.30" y="781.60" width="16.40" height="4.80" fill="#fff" stroke="#222" stroke-width="1.10"/><circle cx="833.03" cy="784.20" r=".95" fill="#111"/><circle cx="838.50" cy="784.20" r=".95" fill="#111"/><circle cx="843.97" cy="784.20" r=".95" fill="#111"/>
<circle cx="833.4" cy="784" r="1.700" fill="none" stroke="#222" stroke-width=".8"/>
<rect x="852.40" y="779.30" width="17.30" height="10.40" fill="#fff" stroke="#1c1c1c" stroke-width="1.15"/><circle cx="855.17" cy="784.08" r="0.95" fill="#000"/><circle cx="859.10" cy="784.08" r="0.95" fill="#000"/><circle cx="863.02" cy="784.08" r="0.95" fill="#000"/><circle cx="866.95" cy="784.08" r="0.95" fill="#000"/><rect x="855.69" y="787.30" width="7.96" height="2" fill="#000"/>
<rect x="876.10" y="779.30" width="17.50" height="10.40" fill="#fff" stroke="#1c1c1c" stroke-width="1.15"/><circle cx="878.90" cy="784.08" r="0.95" fill="#000"/><circle cx="882.87" cy="784.08" r="0.95" fill="#000"/><circle cx="886.85" cy="784.08" r="0.95" fill="#000"/><circle cx="890.82" cy="784.08" r="0.95" fill="#000"/><rect x="879.43" y="787.30" width="8.05" height="2" fill="#000"/>
<rect x="915.70" y="779.30" width="13.00" height="9.60" fill="#fff" stroke="#222" stroke-width="1.10"/><circle cx="918.40" cy="782.00" r="1.05" fill="#111"/><circle cx="918.40" cy="786.20" r="1.05" fill="#111"/><path d="M920.30 780.10V788.10" stroke="#666" stroke-width=".6"/><circle cx="922.20" cy="782.00" r="1.05" fill="#111"/><path d="M924.10 780.10V788.10" stroke="#666" stroke-width=".6"/><circle cx="926.00" cy="782.00" r="1.05" fill="#111"/><circle cx="926.00" cy="786.20" r="1.05" fill="#111"/>
<rect x="942.60" y="779.60" width="29.40" height="8.40" fill="#fff" stroke="#222" stroke-width="1.15"/>
<circle cx="945.00" cy="782.20" r="0.90" fill="#000"/><circle cx="945.00" cy="785.60" r="0.90" fill="#000"/><circle cx="947.72" cy="782.20" r="0.90" fill="#000"/><circle cx="947.72" cy="785.60" r="0.90" fill="#000"/><circle cx="950.44" cy="782.20" r="0.90" fill="#000"/><circle cx="950.44" cy="785.60" r="0.90" fill="#000"/><circle cx="958.60" cy="782.20" r="0.90" fill="#000"/><circle cx="958.60" cy="785.60" r="0.90" fill="#000"/><circle cx="961.32" cy="782.20" r="0.90" fill="#000"/><circle cx="961.32" cy="785.60" r="0.90" fill="#000"/><circle cx="964.04" cy="782.20" r="0.90" fill="#000"/><circle cx="964.04" cy="785.60" r="0.90" fill="#000"/><circle cx="966.76" cy="782.20" r="0.90" fill="#000"/><circle cx="966.76" cy="785.60" r="0.90" fill="#000"/><circle cx="969.48" cy="782.20" r="0.90" fill="#000"/><circle cx="969.48" cy="785.60" r="0.90" fill="#000"/>
<rect x="975.80" y="779.60" width="22.90" height="8.60" fill="#fff" stroke="#222" stroke-width="1.10"/><circle cx="978.73" cy="782.05" r="1.05" fill="#111"/><circle cx="978.73" cy="785.75" r="1.05" fill="#111"/><path d="M980.86 780.40V787.40" stroke="#666" stroke-width=".6"/><circle cx="982.99" cy="782.05" r="1.05" fill="#111"/><circle cx="982.99" cy="785.75" r="1.05" fill="#111"/><path d="M985.12 780.40V787.40" stroke="#666" stroke-width=".6"/><circle cx="987.25" cy="782.05" r="1.05" fill="#111"/><circle cx="987.25" cy="785.75" r="1.05" fill="#111"/><path d="M989.38 780.40V787.40" stroke="#666" stroke-width=".6"/><circle cx="991.51" cy="782.05" r="1.05" fill="#111"/><circle cx="991.51" cy="785.75" r="1.05" fill="#111"/><path d="M993.64 780.40V787.40" stroke="#666" stroke-width=".6"/><circle cx="995.77" cy="785.75" r="1.05" fill="#111"/>
<rect x="1004.30" y="779.60" width="23.10" height="8.60" fill="#fff" stroke="#222" stroke-width="1.10"/><circle cx="1007.25" cy="782.05" r="1.05" fill="#111"/><circle cx="1007.25" cy="785.75" r="1.05" fill="#111"/><path d="M1009.40 780.40V787.40" stroke="#666" stroke-width=".6"/><circle cx="1011.55" cy="782.05" r="1.05" fill="#111"/><circle cx="1011.55" cy="785.75" r="1.05" fill="#111"/><path d="M1013.70 780.40V787.40" stroke="#666" stroke-width=".6"/><circle cx="1015.85" cy="782.05" r="1.05" fill="#111"/><circle cx="1015.85" cy="785.75" r="1.05" fill="#111"/><path d="M1018.00 780.40V787.40" stroke="#666" stroke-width=".6"/><circle cx="1020.15" cy="782.05" r="1.05" fill="#111"/><circle cx="1020.15" cy="785.75" r="1.05" fill="#111"/><path d="M1022.30 780.40V787.40" stroke="#666" stroke-width=".6"/><circle cx="1024.45" cy="785.75" r="1.05" fill="#111"/>
<rect x="1033.10" y="778.30" width="27.80" height="11.70" fill="#fff" stroke="#1c1c1c" stroke-width="1.15"/>
<path d="M1037.60 786.300V782.300H1056.60V785H1041.60V786.300z" fill="#fff" stroke="#1c1c1c" stroke-width=".9"/>
<rect x="1062.60" y="778.30" width="27.80" height="11.70" fill="#fff" stroke="#1c1c1c" stroke-width="1.15"/>
<path d="M1067.10 786.300V782.300H1086.10V785H1071.10V786.300z" fill="#fff" stroke="#1c1c1c" stroke-width=".9"/>
<rect x="1093.30" y="781.60" width="17.20" height="4.70" fill="#fff" stroke="#222" stroke-width="1.10"/><circle cx="1095.45" cy="784.15" r=".95" fill="#111"/><circle cx="1099.75" cy="784.15" r=".95" fill="#111"/><circle cx="1104.05" cy="784.15" r=".95" fill="#111"/><circle cx="1108.35" cy="784.15" r=".95" fill="#111"/>
<circle cx="1096.3" cy="784" r="1.600" fill="none" stroke="#222" stroke-width=".8"/>
<rect x="1120.60" y="779.40" width="23.10" height="9.10" fill="#fff" stroke="#222" stroke-width="1.10"/><circle cx="1123.55" cy="781.98" r="1.05" fill="#111"/><circle cx="1123.55" cy="785.93" r="1.05" fill="#111"/><path d="M1125.70 780.20V787.70" stroke="#666" stroke-width=".6"/><circle cx="1127.85" cy="781.98" r="1.05" fill="#111"/><circle cx="1127.85" cy="785.93" r="1.05" fill="#111"/><path d="M1130.00 780.20V787.70" stroke="#666" stroke-width=".6"/><circle cx="1132.15" cy="781.98" r="1.05" fill="#111"/><circle cx="1132.15" cy="785.93" r="1.05" fill="#111"/><path d="M1134.30 780.20V787.70" stroke="#666" stroke-width=".6"/><circle cx="1136.45" cy="785.93" r="1.05" fill="#111"/><path d="M1138.60 780.20V787.70" stroke="#666" stroke-width=".6"/><circle cx="1140.75" cy="781.98" r="1.05" fill="#111"/><circle cx="1140.75" cy="785.93" r="1.05" fill="#111"/>
<g><path d="M925.98 367.64 L1010.24 367.64 Q1014.65 367.64 1014.65 372.83 L1014.65 474.41" fill="none" stroke="#1c1c1c" stroke-width="1.12" stroke-linejoin="round" stroke-linecap="round"/><path d="M925.98 371.26 L1008.66 371.26 Q1010.24 371.26 1010.24 373.62 L1010.24 474.41" fill="none" stroke="#1c1c1c" stroke-width="1.12" stroke-linejoin="round" stroke-linecap="round"/><path d="M1008.66 474.41 L1016.54 474.41 Q1017.80 475.98 1016.54 477.87 L1008.66 477.87" fill="none" stroke="#1c1c1c" stroke-width="1.12" stroke-linejoin="round" stroke-linecap="round"/><path d="M1014.65 477.87 L1018.43 499.61 Q1018.90 509.84 1008.66 509.37 Q1000.79 507.48 995.28 498.82" fill="none" stroke="#1c1c1c" stroke-width="1.12" stroke-linejoin="round" stroke-linecap="round"/><path d="M1010.24 477.87 L1013.70 498.03 Q1013.70 505.12 1008.66 505.12 Q1003.15 503.54 998.90 496.46 L995.28 498.82" fill="none" stroke="#1c1c1c" stroke-width="1.12" stroke-linejoin="round" stroke-linecap="round"/><path d="M919.69 369.21 L923.62 369.21 L923.62 379.92 L931.50 385.43" fill="none" stroke="#1c1c1c" stroke-width="1.12" stroke-linejoin="round" stroke-linecap="round"/><path d="M919.69 369.21 L920.16 378.35 L925.98 387.01" fill="none" stroke="#1c1c1c" stroke-width="1.12" stroke-linejoin="round" stroke-linecap="round"/><path d="M924.88 387.01 L924.88 472.83 L925.98 473.62 L925.98 491.73 L1008.66 491.73 L1008.66 387.80" fill="none" stroke="#1c1c1c" stroke-width="1.23" stroke-linejoin="round" stroke-linecap="round"/><path d="M925.98 488.58 L1008.66 488.58" fill="none" stroke="#1c1c1c" stroke-width="1.12" stroke-linejoin="round" stroke-linecap="round"/><path d="M925.98 371.26 L925.98 381.50" fill="none" stroke="#1c1c1c" stroke-width="1.12" stroke-linejoin="round" stroke-linecap="round"/><rect x="944.88" y="365.28" width="6.30" height="9.92" rx="1.2" fill="#fff" stroke="#1c1c1c" stroke-width="1"/><rect x="981.89" y="365.28" width="6.30" height="9.92" rx="1.2" fill="#fff" stroke="#1c1c1c" stroke-width="1"/><path d="M951.97 368.58 Q955.12 378.35 966.93 378.66 Q978.74 378.35 981.10 368.58" fill="none" stroke="#1c1c1c" stroke-width="1.12" stroke-linejoin="round" stroke-linecap="round"/><path d="M955.43 367.64 Q958.27 375.20 966.93 375.51 Q975.59 375.20 977.95 367.64" fill="none" stroke="#1c1c1c" stroke-width="1.12" stroke-linejoin="round" stroke-linecap="round"/><path d="M958.58 371.26 L975.28 371.26" fill="none" stroke="#555" stroke-width="2.46" stroke-linejoin="round" stroke-linecap="round"/><path d="M933.07 367.64 Q936.22 364.17 939.37 367.64" fill="none" stroke="#1c1c1c" stroke-width="1.12" stroke-linejoin="round" stroke-linecap="round"/><path d="M994.49 367.64 Q997.64 364.17 1000.79 367.64" fill="none" stroke="#1c1c1c" stroke-width="1.12" stroke-linejoin="round" stroke-linecap="round"/><path d="M938.58 379.92 L951.97 379.92 L954.33 375.98" fill="none" stroke="#1c1c1c" stroke-width="1.12" stroke-linejoin="round" stroke-linecap="round"/><path d="M994.49 379.92 L981.10 379.92 L978.74 375.98" fill="none" stroke="#1c1c1c" stroke-width="1.12" stroke-linejoin="round" stroke-linecap="round"/><path d="M925.20 387.32 L931.50 385.43 L939.37 380.71" fill="none" stroke="#1c1c1c" stroke-width="1.12" stroke-linejoin="round" stroke-linecap="round"/><path d="M1008.66 387.32 L1002.36 385.43 L994.49 380.71" fill="none" stroke="#1c1c1c" stroke-width="1.12" stroke-linejoin="round" stroke-linecap="round"/><circle cx="935.91" cy="378.35" r="5.4" fill="#fff" stroke="#1c1c1c" stroke-width="1"/><circle cx="935.91" cy="378.35" r="3.3" fill="#fff" stroke="#1c1c1c" stroke-width=".9"/><path d="M935.11 377.55l1.500 1.500M936.71 377.55l-1.500 1.500M935.91 376.55v1.800" stroke="#1c1c1c" stroke-width=".7"/><circle cx="998.43" cy="378.35" r="5.4" fill="#fff" stroke="#1c1c1c" stroke-width="1"/><circle cx="998.43" cy="378.35" r="3.3" fill="#fff" stroke="#1c1c1c" stroke-width=".9"/><path d="M997.63 377.55l1.500 1.500M999.23 377.55l-1.500 1.500M998.43 376.55v1.800" stroke="#1c1c1c" stroke-width=".7"/><circle cx="932.76" cy="480.39" r="5.4" fill="#fff" stroke="#1c1c1c" stroke-width="1"/><circle cx="932.76" cy="480.39" r="3.3" fill="#fff" stroke="#1c1c1c" stroke-width=".9"/><path d="M931.96 479.59l1.500 1.500M933.56 479.59l-1.500 1.500M932.76 478.59v1.800" stroke="#1c1c1c" stroke-width=".7"/><circle cx="1000.79" cy="480.39" r="5.4" fill="#fff" stroke="#1c1c1c" stroke-width="1"/><circle cx="1000.79" cy="480.39" r="3.3" fill="#fff" stroke="#1c1c1c" stroke-width=".9"/><path d="M999.99 479.59l1.500 1.500M1001.59 479.59l-1.500 1.500M1000.79 478.59v1.800" stroke="#1c1c1c" stroke-width=".7"/><path d="M945.67 390.63 L987.40 390.63 Q996.38 390.63 996.38 399.61 L996.38 407.48 Q1000.00 411.42 999.53 416.93 Q999.21 423.23 993.70 425.28 Q991.65 429.53 993.70 434.25 Q999.53 436.30 999.53 442.91 Q999.84 448.43 996.38 452.05 L996.38 460.24 Q996.38 469.21 987.40 469.21 L945.67 469.21 Q936.69 469.21 936.69 460.24 L936.69 452.05 Q933.07 448.43 933.39 442.91 Q933.54 436.30 939.37 434.25 Q941.42 429.53 939.37 425.28 Q933.54 423.23 933.39 416.93 Q933.07 411.42 936.69 407.48 L936.69 399.61 Q936.69 390.63 945.67 390.63 Z" fill="#fff" stroke="#1c1c1c" stroke-width="1.18" stroke-linejoin="round" stroke-linecap="round"/><rect x="954.65" y="407.48" width="24.09" height="42.05" fill="#fff" stroke="#8a8a8a" stroke-width="0.90"/><polygon points="937.01,470.47 941.26,473.62 937.48,474.41" fill="#333"/><path d="M947.24 488.58 L947.24 483.07 Q947.56 479.45 951.18 479.45 L960.63 479.45 Q963.78 479.45 964.25 483.07 L964.25 488.58" fill="none" stroke="#1c1c1c" stroke-width="1.12" stroke-linejoin="round" stroke-linecap="round"/><path d="M970.08 488.58 L970.08 483.07 Q970.39 479.45 974.02 479.45 L983.15 479.45 Q986.61 479.45 986.93 483.07 L986.93 488.58" fill="none" stroke="#1c1c1c" stroke-width="1.12" stroke-linejoin="round" stroke-linecap="round"/><path d="M955.91 488.58 Q955.91 484.65 959.06 484.65 L964.25 484.65" fill="none" stroke="#1c1c1c" stroke-width="1.12" stroke-linejoin="round" stroke-linecap="round"/><path d="M978.27 488.58 Q978.27 484.65 975.12 484.65 L970.08 484.65" fill="none" stroke="#1c1c1c" stroke-width="1.12" stroke-linejoin="round" stroke-linecap="round"/><path d="M964.57 480.71 L964.57 492.52 Q966.93 496.46 969.29 492.52 L969.29 480.71" fill="#fff" stroke="#1c1c1c" stroke-width="1.12" stroke-linejoin="round" stroke-linecap="round"/><rect x="938.58" y="491.73" width="8.66" height="2.83" rx="1" fill="#fff" stroke="#1c1c1c" stroke-width=".9"/><rect x="986.61" y="491.73" width="8.66" height="2.83" rx="1" fill="#fff" stroke="#1c1c1c" stroke-width=".9"/></g>
<path d="M838.30 228.80V289.60M883.80 263.80V285.60M967.50 233.30V420.60M1076.80 257.00V284.60M1103.80 233.30V284.60M1125.00 213.30V286.60M1140.30 258.80V286.40M1159.30 310.50H1182.00M1159.30 336.70H1182.00M1158.00 385.00H1183.60M1156.80 484.20H1183.30M1158.00 534.30H1183.30M1113 555.000V563.800H1183.3M1095.600 555.000V577.500H1183.3M1080.500 555.000V590.000H1183.3M1064.500 555.000V600.800H1183.3M1145.00 672.50H1183.30M1143.80 701.80H1183.30M1118.20 723.80H1183.30M1147.60 739.30H1183.30M1020.00 753.10H1183.30M728.30 522.30H861.80M728.30 558.90H1012.00M728.30 584.80H837.00M728.3 673.000H803.800V678.900M728.30 690.30H837.00M728.30 738.30H957.60M728.30 759.00H837.00M780.30 786.80V801.30M814.80 784.60V812.60M839.30 784.60V829.60M859.00 787.60V846.90M882.50 787.60V862.60M921.00 785.40V888.80M953.00 785.40V906.30M988.30 785.40V890.00M1013.80 785.40V876.30M1047.00 785.00V862.60M1076.80 785.00V847.60M1101.80 784.40V831.30M1133.60 784.40V810.00" fill="none" stroke="#fff" stroke-width="4.300"/>
<rect x="828.20" y="578.60" width="146.60" height="13.90" fill="none" stroke="#1c1c1c" stroke-width="1.10"/><rect x="828.20" y="682.70" width="146.60" height="13.90" fill="none" stroke="#1c1c1c" stroke-width="1.10"/><rect x="830.20" y="751.40" width="42.20" height="14.30" fill="none" stroke="#1c1c1c" stroke-width="1.15"/><rect x="800.70" y="676.70" width="9.30" height="5.00" fill="#1a1a1a"/><rect x="801.78" y="678.25" width="2.500" height="2.300" fill="#fff"/><rect x="806.42" y="678.25" width="2.500" height="2.300" fill="#fff"/><rect x="1011.80" y="751.20" width="9.40" height="4.60" fill="#1a1a1a"/><rect x="1012.90" y="752.55" width="2.500" height="2.300" fill="#fff"/><rect x="1017.60" y="752.55" width="2.500" height="2.300" fill="#fff"/>
<path d="M838.30 228.80V289.60M883.80 263.80V285.60M967.50 233.30V420.60M1076.80 257.00V284.60M1103.80 233.30V284.60M1125.00 213.30V286.60M1140.30 258.80V286.40M1159.30 310.50H1182.00M1159.30 336.70H1182.00M1158.00 385.00H1183.60M1156.80 484.20H1183.30M1158.00 534.30H1183.30M1113 555.000V563.800H1183.3M1095.600 555.000V577.500H1183.3M1080.500 555.000V590.000H1183.3M1064.500 555.000V600.800H1183.3M1145.00 672.50H1183.30M1143.80 701.80H1183.30M1118.20 723.80H1183.30M1147.60 739.30H1183.30M1020.00 753.10H1183.30M728.30 522.30H861.80M728.30 558.90H1012.00M728.30 584.80H837.00M728.3 673.000H803.800V678.900M728.30 690.30H837.00M728.30 738.30H957.60M728.30 759.00H837.00M780.30 786.80V801.30M814.80 784.60V812.60M839.30 784.60V829.60M859.00 787.60V846.90M882.50 787.60V862.60M921.00 785.40V888.80M953.00 785.40V906.30M988.30 785.40V890.00M1013.80 785.40V876.30M1047.00 785.00V862.60M1076.80 785.00V847.60M1101.80 784.40V831.30M1133.60 784.40V810.00" fill="none" stroke="#ec0008" stroke-width="1.95"/>
<g>
<text x="806.20" y="223.80" font-size="12.72" textLength="59.30" lengthAdjust="spacingAndGlyphs" fill="#1b1a1f" stroke="#1b1a1f" stroke-width=".22">CPU_PWR1</text>
<text x="851.80" y="256.80" font-size="12.72" textLength="59.40" lengthAdjust="spacingAndGlyphs" fill="#1b1a1f" stroke="#1b1a1f" stroke-width=".22">CPU_PWR2</text>
<text x="915.60" y="226.70" font-size="12.72" textLength="90.60" lengthAdjust="spacingAndGlyphs" fill="#1b1a1f" stroke="#1b1a1f" stroke-width=".22">Processor Socket</text>
<text x="1053.80" y="226.70" font-size="12.72" textLength="65.70" lengthAdjust="spacingAndGlyphs" fill="#1b1a1f" stroke="#1b1a1f" stroke-width=".22">PUMP_FAN1</text>
<text x="1038.10" y="251.00" font-size="12.72" textLength="56.40" lengthAdjust="spacingAndGlyphs" fill="#1b1a1f" stroke="#1b1a1f" stroke-width=".22">CPU_FAN1</text>
<text x="1105.60" y="208.80" font-size="12.72" textLength="34.40" lengthAdjust="spacingAndGlyphs" fill="#1b1a1f" stroke="#1b1a1f" stroke-width=".22">JRGB2</text>
<text x="1127.10" y="253.50" font-size="12.72" textLength="62.10" lengthAdjust="spacingAndGlyphs" fill="#1b1a1f" stroke="#1b1a1f" stroke-width=".22">JRAINBOW1</text>
<text x="1183.80" y="314.80" font-size="12.72" textLength="53.20" lengthAdjust="spacingAndGlyphs" fill="#1b1a1f" stroke="#1b1a1f" stroke-width=".22">SYS_FAN1</text>
<text x="1183.80" y="341.00" font-size="12.72" textLength="54.40" lengthAdjust="spacingAndGlyphs" fill="#1b1a1f" stroke="#1b1a1f" stroke-width=".22">SYS_FAN2</text>
<text x="1186.30" y="387.50" font-size="12.72" textLength="55.70" lengthAdjust="spacingAndGlyphs" fill="#1b1a1f" stroke="#1b1a1f" stroke-width=".22">ATX_PWR1</text>
<text x="1186.30" y="488.50" font-size="12.72" textLength="33.70" lengthAdjust="spacingAndGlyphs" fill="#1b1a1f" stroke="#1b1a1f" stroke-width=".22">JUSB3</text>
<text x="1186.30" y="538.80" font-size="12.72" textLength="33.70" lengthAdjust="spacingAndGlyphs" fill="#1b1a1f" stroke="#1b1a1f" stroke-width=".22">JUSB4</text>
<text x="1186.80" y="565.50" font-size="12.72" textLength="43.20" lengthAdjust="spacingAndGlyphs" fill="#1b1a1f" stroke="#1b1a1f" stroke-width=".22">DIMMB2</text>
<text x="1186.80" y="579.70" font-size="12.72" textLength="42.40" lengthAdjust="spacingAndGlyphs" fill="#1b1a1f" stroke="#1b1a1f" stroke-width=".22">DIMMB1</text>
<text x="1186.80" y="591.80" font-size="12.72" textLength="42.40" lengthAdjust="spacingAndGlyphs" fill="#1b1a1f" stroke="#1b1a1f" stroke-width=".22">DIMMA2</text>
<text x="1186.80" y="603.80" font-size="12.72" textLength="41.20" lengthAdjust="spacingAndGlyphs" fill="#1b1a1f" stroke="#1b1a1f" stroke-width=".22">DIMMA1</text>
<text x="1186.80" y="676.70" font-size="12.72" textLength="26.80" lengthAdjust="spacingAndGlyphs" fill="#1b1a1f" stroke="#1b1a1f" stroke-width=".22">SATA</text>
<text x="1232.00" y="676.70" font-size="12.72" textLength="5.00" lengthAdjust="spacingAndGlyphs" fill="#1b1a1f" stroke="#1b1a1f" stroke-width=".22">5</text>
<text x="1255.80" y="676.70" font-size="12.72" textLength="5.00" lengthAdjust="spacingAndGlyphs" fill="#1b1a1f" stroke="#1b1a1f" stroke-width=".22">6</text>
<text x="1186.80" y="706.70" font-size="12.72" textLength="26.80" lengthAdjust="spacingAndGlyphs" fill="#1b1a1f" stroke="#1b1a1f" stroke-width=".22">SATA</text>
<text x="1232.20" y="706.70" font-size="12.72" textLength="5.00" lengthAdjust="spacingAndGlyphs" fill="#1b1a1f" stroke="#1b1a1f" stroke-width=".22">7</text>
<text x="1256.50" y="706.70" font-size="12.72" textLength="5.20" lengthAdjust="spacingAndGlyphs" fill="#1b1a1f" stroke="#1b1a1f" stroke-width=".22">8</text>
<text x="1189.30" y="725.60" font-size="12.72" textLength="26.90" lengthAdjust="spacingAndGlyphs" fill="#1b1a1f" stroke="#1b1a1f" stroke-width=".22">M2_3</text>
<text x="1187.50" y="743.10" font-size="12.72" textLength="33.70" lengthAdjust="spacingAndGlyphs" fill="#1b1a1f" stroke="#1b1a1f" stroke-width=".22">JTPM1</text>
<text x="1187.50" y="757.50" font-size="12.72" textLength="21.20" lengthAdjust="spacingAndGlyphs" fill="#1b1a1f" stroke="#1b1a1f" stroke-width=".22">JCI1</text>
<text x="670.60" y="527.50" font-size="12.72" textLength="54.40" lengthAdjust="spacingAndGlyphs" fill="#1b1a1f" stroke="#1b1a1f" stroke-width=".22">SYS_FAN5</text>
<text x="697.60" y="561.80" font-size="12.72" textLength="26.90" lengthAdjust="spacingAndGlyphs" fill="#1b1a1f" stroke="#1b1a1f" stroke-width=".22">M2_1</text>
<text x="688.30" y="588.00" font-size="12.72" textLength="36.20" lengthAdjust="spacingAndGlyphs" fill="#1b1a1f" stroke="#1b1a1f" stroke-width=".22">PCI_E1</text>
<text x="692.60" y="677.50" font-size="12.72" textLength="31.90" lengthAdjust="spacingAndGlyphs" fill="#1b1a1f" stroke="#1b1a1f" stroke-width=".22">JBAT1</text>
<text x="688.30" y="694.20" font-size="12.72" textLength="36.70" lengthAdjust="spacingAndGlyphs" fill="#1b1a1f" stroke="#1b1a1f" stroke-width=".22">PCI_E2</text>
<text x="697.60" y="741.80" font-size="12.72" textLength="27.40" lengthAdjust="spacingAndGlyphs" fill="#1b1a1f" stroke="#1b1a1f" stroke-width=".22">M2_2</text>
<text x="686.80" y="762.50" font-size="12.72" textLength="37.70" lengthAdjust="spacingAndGlyphs" fill="#1b1a1f" stroke="#1b1a1f" stroke-width=".22">PCI_E3</text>
<text x="763.10" y="810.50" font-size="12.72" textLength="33.90" lengthAdjust="spacingAndGlyphs" fill="#1b1a1f" stroke="#1b1a1f" stroke-width=".22">JAUD1</text>
<text x="795.10" y="824.00" font-size="12.72" textLength="34.10" lengthAdjust="spacingAndGlyphs" fill="#1b1a1f" stroke="#1b1a1f" stroke-width=".22">JRGB1</text>
<text x="791.30" y="840.30" font-size="12.72" textLength="63.20" lengthAdjust="spacingAndGlyphs" fill="#1b1a1f" stroke="#1b1a1f" stroke-width=".22">JRAINBOW2</text>
<text x="821.80" y="857.10" font-size="12.72" textLength="53.90" lengthAdjust="spacingAndGlyphs" fill="#1b1a1f" stroke="#1b1a1f" stroke-width=".22">SYS_FAN3</text>
<text x="858.80" y="873.40" font-size="12.72" textLength="53.70" lengthAdjust="spacingAndGlyphs" fill="#1b1a1f" stroke="#1b1a1f" stroke-width=".22">SYS_FAN4</text>
<text x="897.10" y="898.50" font-size="12.72" textLength="40.90" lengthAdjust="spacingAndGlyphs" fill="#1b1a1f" stroke="#1b1a1f" stroke-width=".22">JDASH1</text>
<text x="935.10" y="917.10" font-size="12.72" textLength="31.60" lengthAdjust="spacingAndGlyphs" fill="#1b1a1f" stroke="#1b1a1f" stroke-width=".22">JTBT1</text>
<text x="976.30" y="900.50" font-size="12.72" textLength="33.70" lengthAdjust="spacingAndGlyphs" fill="#1b1a1f" stroke="#1b1a1f" stroke-width=".22">JUSB2</text>
<text x="998.80" y="888.30" font-size="12.72" textLength="33.20" lengthAdjust="spacingAndGlyphs" fill="#1b1a1f" stroke="#1b1a1f" stroke-width=".22">JUSB1</text>
<text x="1029.30" y="873.50" font-size="12.72" textLength="34.20" lengthAdjust="spacingAndGlyphs" fill="#1b1a1f" stroke="#1b1a1f" stroke-width=".22">SATAA</text>
<text x="1056.00" y="857.50" font-size="12.72" textLength="34.50" lengthAdjust="spacingAndGlyphs" fill="#1b1a1f" stroke="#1b1a1f" stroke-width=".22">SATAB</text>
<text x="1087.60" y="843.10" font-size="12.72" textLength="25.10" lengthAdjust="spacingAndGlyphs" fill="#1b1a1f" stroke="#1b1a1f" stroke-width=".22">JFP2</text>
<text x="1118.10" y="820.50" font-size="12.72" textLength="24.40" lengthAdjust="spacingAndGlyphs" fill="#1b1a1f" stroke="#1b1a1f" stroke-width=".22">JFP1</text>
</g>
<polygon points="1217.600,668.60 1228.800,668.60 1223.200,677.50" fill="#111"/>
<polygon points="1241.40,677.40 1252.60,677.40 1247.00,668.50" fill="#111"/>
<polygon points="1217.600,698.60 1228.800,698.60 1223.200,707.50" fill="#111"/>
<polygon points="1242.00,707.40 1253.20,707.40 1247.60,698.50" fill="#111"/>
<path d="M1229.400 643.100C1221 644.800 1212 646.300 1205 647.500C1198 649 1192 652 1186.200 654.400C1180 657 1174 660 1168.700 661.900C1163 664 1156 666 1150.500 667.700" fill="none" stroke="#0574d6" stroke-width="5.600" stroke-linecap="round" stroke-linejoin="round"/>
<path d="M1147.400 660.300C1146.300 663 1146.100 666 1146.900 668C1148 671 1150 672.100 1153 672.100C1158 672.100 1162 671.800 1166.900 671.600" fill="none" stroke="#0574d6" stroke-width="5.800" stroke-linecap="round" stroke-linejoin="round"/>
<path d="M1147.800 661L1152 668L1148 669z" fill="#0574d6" stroke="#0574d6" stroke-width="2" stroke-linejoin="round"/>
</svg>
<div id="taskbar" class="abs"><div class="abs" style="left:0;top:0;width:1920px;height:1px;background:rgba(110,115,120,.38)"></div>
<div class="abs" style="left:21px;top:13px;width:20px;height:20px;border-radius:50%;background:linear-gradient(135deg,#f6c324 10%,#f79a12 50%,#f2650c 95%)"></div>
<div class="abs" style="left:30.300px;top:6.200px;width:15.600px;height:15.600px;border-radius:50%;background:#f99fb2"></div>
<span class="t" style="left:36.40px;top:8.15px;font-size:11.05px;color:#000000;transform:scaleX(0.6511);">1</span>
<span class="t" style="left:50.70px;top:10.56px;font-size:12.21px;color:#ffffff;transform:scaleX(0.8578);">18°C</span>
<span class="t" style="left:50.70px;top:26.32px;font-size:12.50px;color:#d2d3d6;transform:scaleX(0.9273);">Güneşli</span>
<svg class="i" style="left:705px;top:13px" width="23" height="23" viewBox="0 0 23 23"><defs><linearGradient id="wg" x1="0" y1="0" x2="1" y2="1"><stop offset="0" stop-color="#6fd4ff"/><stop offset="1" stop-color="#1490df"/></linearGradient></defs><g fill="url(#wg)"><rect width="11" height="11" rx=".8"/><rect x="12" width="11" height="11" rx=".8"/><rect y="12" width="11" height="11" rx=".8"/><rect x="12" y="12" width="11" height="11" rx=".8"/></g></svg>
<div id="search" class="abs"></div>
<svg class="i" style="left:751px;top:15px" width="17" height="17" viewBox="0 0 17 17" fill="none" stroke="#e6e8f0" stroke-width="1.700"><circle cx="7" cy="7" r="5.200"/><path d="M10.900 10.900l4.600 4.600" stroke-linecap="round"/></svg>
<span class="t" style="left:778.20px;top:17.53px;font-size:13.08px;color:#dfe1ea;transform:scaleX(0.9874);">Ara</span>
<svg class="i" style="left:972.500px;top:12.500px" width="25" height="23" viewBox="0 0 25 23"><rect x="7" y="0" width="18" height="15" rx="2" fill="#f3f3f3"/><rect x="0" y="6.500" width="17.500" height="16" rx="2" fill="#6e6e6e" fill-opacity=".92"/><rect x="7" y="6.500" width="10.500" height="8.500" fill="#c9c9c9"/></svg>
<svg class="i" style="left:1015.500px;top:12px" width="26" height="26" viewBox="0 0 26 26"><defs><linearGradient id="cg" x1="0" y1="0" x2="1" y2="1"><stop offset="0" stop-color="#8a8fe8"/><stop offset="1" stop-color="#5558c9"/></linearGradient></defs><path d="M13.500 1.500a11 11 0 1 1-5.300 20.640L2.500 24.500l1.600-5.200A11 11 0 0 1 13.500 1.500z" fill="url(#cg)"/><rect x="7" y="8.200" width="8.800" height="8" rx="1.800" fill="#fff"/><path d="M16.500 11.200l3.500-2.400v7l-3.500-2.400z" fill="#fff"/></svg>
<svg class="i" style="left:1061px;top:13.300px" width="24.500" height="21.500" viewBox="0 0 24.500 21.500"><path d="M1.500 0h7l2.500 2.500h12a1.500 1.500 0 0 1 1.500 1.500v16a1.500 1.500 0 0 1-1.500 1.500h-21.500a1.500 1.500 0 0 1-1.500-1.500v-18.500A1.500 1.500 0 0 1 1.500 0z" fill="#f5b21b"/><path d="M0 6.500h24.500v13.500a1.500 1.500 0 0 1-1.500 1.500h-21.500a1.500 1.500 0 0 1-1.500-1.500z" fill="#fbd24c"/><rect x="6" y="14.500" width="12.500" height="7" rx="1.200" fill="#1a7fd6"/><rect x="8.500" y="17" width="7.500" height="2" fill="#0f5fae"/></svg>
<svg class="i" style="left:1104.500px;top:11.500px" width="24" height="24" viewBox="0 0 24 24"><defs><linearGradient id="eg" x1="0" y1="0" x2="1" y2="1"><stop offset="0" stop-color="#35c1f1"/><stop offset=".55" stop-color="#1b8fd6"/><stop offset="1" stop-color="#1565b8"/></linearGradient><linearGradient id="eg2" x1="0" y1="0" x2="1" y2="0"><stop offset="0" stop-color="#2dc6a8"/><stop offset="1" stop-color="#6fdc4f"/></linearGradient></defs><circle cx="12" cy="12" r="12" fill="url(#eg)"/><path d="M1.500 7.500C4 2.500 9 0 14 .3c6 .5 10 5 10 10 0 3-2 5.200-5 5.200-2 0-3.500-.8-3.500-2 0-.8.8-1.200.8-2.500 0-2-1.800-3.800-4.800-3.800-4 0-7 2.500-8.500 6 -1-2-.6-4.500.5-5.700z" fill="url(#eg2)" fill-opacity=".9"/><path d="M11.800 7.400c-3.300 0-5.800 2.700-5.800 6.300 0 4.500 3.600 8.300 8.500 8.300 2.500 0 4.800-.8 6.500-2.300-1.500.8-3 1.100-4.500.9-3.500-.5-5.500-3-5.500-5.800 0-1.500.8-2.500 1.800-3.100-.3-2.500-.5-4.300-1-4.300z" fill="#124a9c" fill-opacity=".85"/></svg>
<div class="abs" style="left:1141px;top:4px;width:40px;height:40px;border-radius:4px;background:rgba(255,255,255,.075);box-shadow:inset 0 0 0 1px rgba(255,255,255,.045)"></div>
<svg class="i" style="left:1148.500px;top:11.700px" width="24" height="24" viewBox="0 0 48 48"><circle cx="24" cy="24" r="22" fill="#fff"/><path d="M24 2a22 22 0 0 1 19.050 11H24a11 11 0 0 0-9.530 5.500L5.200 12.700A22 22 0 0 1 24 2z" fill="#e33b2e"/><path d="M43.050 13A22 22 0 0 1 23.300 46l9.700-16.500A11 11 0 0 0 33.530 18.500L43.050 13z" fill="#fbc116" transform="rotate(0 24 24)"/><path d="M43.050 13H24a11 11 0 0 1 9.530 16.500L24 46a22 22 0 0 0 19.050-33z" fill="#fbc116"/><path d="M5.200 12.700l9.270 16.800A11 11 0 0 0 24 35l-0 11A22 22 0 0 1 5.200 12.700z" fill="#2da44e"/><path d="M14.470 29.500A11 11 0 0 0 33.530 29.500L24 46A22 22 0 0 1 5.200 12.700z" fill="#2da44e"/><circle cx="24" cy="24" r="10" fill="#fff"/><circle cx="24" cy="24" r="8" fill="#1a73e8"/></svg>
<div class="abs" style="left:1153.500px;top:39.700px;width:15px;height:3px;border-radius:1.500px;background:#4cc2ff"></div>
<svg class="i" style="left:1193px;top:12.500px" width="23.500" height="24" viewBox="0 0 23.500 24"><path d="M7 6V3.200A2.200 2.200 0 0 1 9.200 1h5.100a2.200 2.200 0 0 1 2.200 2.200V6" fill="none" stroke="#2f9be8" stroke-width="1.800"/><path d="M0 5.500h23.500v15.500a3 3 0 0 1-3 3h-17.500a3 3 0 0 1-3-3z" fill="#f2f2f2"/><rect x="7" y="9.500" width="4.300" height="4.300" fill="#f25022"/><rect x="12.200" y="9.500" width="4.300" height="4.300" fill="#7fba00"/><rect x="7" y="14.700" width="4.300" height="4.300" fill="#00a4ef"/><rect x="12.200" y="14.700" width="4.300" height="4.300" fill="#ffb900"/></svg>
<svg class="i" style="left:1763.300px;top:20.500px" width="11" height="6.500" viewBox="0 0 11 6.500" fill="none" stroke="#fff" stroke-width="1.500"><path d="M.6 6L5.500 1l4.900 5"/></svg>
<svg class="i" style="left:1793px;top:16px" width="17" height="16.500" viewBox="0 0 17 16.500" fill="none" stroke="#fff" stroke-width="1.100"><path d="M11 .8H1.600A1 1 0 0 0 .6 1.800v9.400a1 1 0 0 0 1 1H11"/><path d="M3.500 15.900h8.500M5.800 12.400v3.300M9.500 12.400v3.300"/><rect x="12" y=".8" width="4" height="7" rx="1"/><path d="M14 7.800v8.400M12.800 2.800h2.400"/></svg>
<svg class="i" style="left:1816.500px;top:17px" width="17" height="14.500" viewBox="0 0 17 14.500" fill="none" stroke="#fff" stroke-width="1.100"><path d="M.8 4.800h2.700L7 1.200v12L3.500 9.700H.8z" stroke-linejoin="round"/><path d="M9.200 4.800a3.500 3.500 0 0 1 0 4.900"/><path d="M11.300 2.600a6.500 6.500 0 0 1 0 9.300" stroke="#8b8f99"/><path d="M13.500 .6a9.500 9.500 0 0 1 0 13.300" stroke="#5d616c"/></svg>
<span class="t" style="left:1872.80px;top:11.33px;font-size:11.19px;color:#ffffff;transform:scaleX(0.9997);">10:34</span>
<span class="t" style="left:1850.30px;top:27.23px;font-size:11.19px;color:#ffffff;transform:scaleX(1.0143);">4.10.2023</span>
</div>
</body></html>
